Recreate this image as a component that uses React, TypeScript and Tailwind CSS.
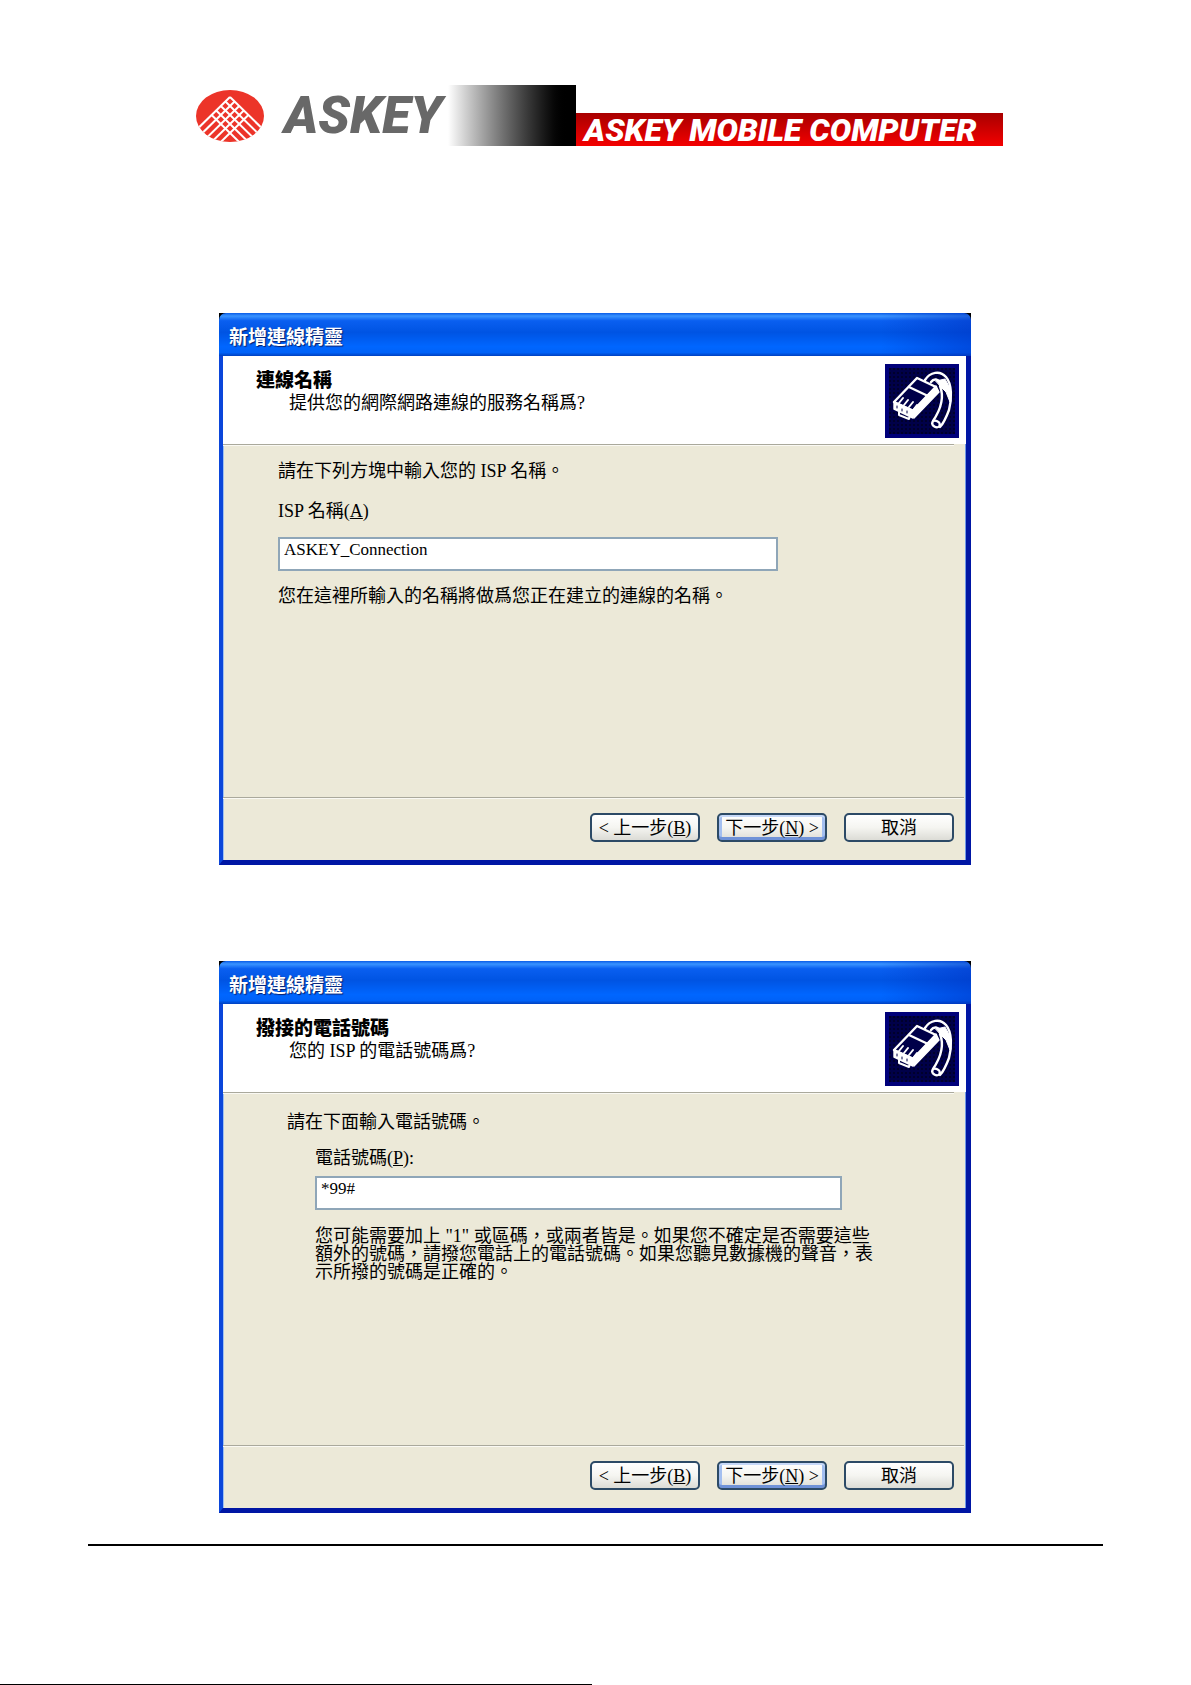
import type { ReactNode } from "react";
import clsx from "clsx";

function AskeyMark() {
  const steps = [0, 1, 2, 3, 4];

  return (
    <svg viewBox="0 0 68 52" className="h-13 w-17 shrink-0" aria-hidden="true">
      <clipPath id="mark">
        <ellipse cx="34" cy="26" rx="34" ry="26" />
      </clipPath>
      <g clipPath="url(#mark)">
        <rect width="68" height="52" fill="#ec3429" />
        <g stroke="#fff" strokeWidth="2">
          {steps.map((n) => (
            <g key={n}>
              <line x1={34 - n * 4.6} y1={7 + n * 4.5} x2={80 - n * 4.6} y2={52 + n * 4.5} />
              <line x1={34 + n * 4.6} y1={7 + n * 4.5} x2={-12 + n * 4.6} y2={52 + n * 4.5} />
            </g>
          ))}
        </g>
      </g>
    </svg>
  );
}

function PlugIcon() {
  return (
    <svg viewBox="0 0 74 74" className="mt-2 size-[74px] shrink-0" aria-hidden="true">
      <defs>
        <pattern id="dots" width="4" height="4" patternUnits="userSpaceOnUse">
          <rect width="4" height="4" fill="#000049" />
          <rect width="2" height="2" fill="#00002c" />
        </pattern>
      </defs>
      <rect width="74" height="74" fill="#00007a" />
      <rect x="4" y="4" width="66" height="66" fill="url(#dots)" />
      <g stroke="#fff" strokeLinecap="round" strokeLinejoin="round" fill="none">
        <path d="M40 16C45 8 55 6 61 13C67 20 67 35 64 46C61 54 58 60 55 63" strokeWidth="2.4" />
        <path d="M46 18C49 14 53 15 56 19" strokeWidth="2.4" />
        <path d="M55 22C59 32 56 45 48 57" strokeWidth="2.4" />
        <path d="M51 17L60 15L65 24L65 38L61 28L56 23Z" fill="#fff" strokeWidth="1" />
        <ellipse cx="51" cy="60" rx="4" ry="3" transform="rotate(25 51 60)" fill="#000049" strokeWidth="2.4" />
        <path d="M32 14L51 23L29 47L9 38Z" fill="#000049" strokeWidth="2.4" />
        <path d="M51 22L54 28L29 54L28 46Z" fill="#fff" strokeWidth="1.4" />
        <path d="M24 23L43 32" strokeWidth="2.4" />
        <path d="M9 38L9 45L28 54L29 47Z" fill="#fff" strokeWidth="1.4" />
        <path d="M14 39L18 34M19 41L23 36M24 43L28 38M29 45L32 41" strokeWidth="2" />
        <path d="M14 48L14 51L24 55L25 52" strokeWidth="2" />
        <path d="M12 42L12 44M17 45L17 47M22 47L22 49" stroke="#000049" strokeWidth="1" />
      </g>
    </svg>
  );
}

function WizardButton({ primary, children }: { primary?: boolean; children: ReactNode }) {
  return (
    <button
      type="button"
      className={clsx(
        "h-[29px] w-[110px] rounded-[5px] border-2 border-[#2c4a66] bg-linear-to-b from-white via-[#f5f5f1] to-[#dcdcd6] text-[18px] leading-5 whitespace-nowrap",
        primary && "shadow-[inset_0_2px_0_#c6d8f8,inset_0_-3px_0_#6f92d8,inset_3px_0_0_#a4bff0,inset_-3px_0_0_#a4bff0]",
      )}
    >
      {children}
    </button>
  );
}

function Separator({ className }: { className?: string }) {
  return <div className={clsx("h-[2px] border-t border-[#aaa99c] bg-[#faf9f3]", className)} />;
}

interface WizardProps {
  heading: string;
  question: string;
  children: ReactNode;
}

function Wizard({ heading, question, children }: WizardProps) {
  return (
    <section className="mx-auto flex min-h-[552px] w-full max-w-[752px] flex-col bg-black">
      <div className="flex h-[43px] items-center rounded-t-[7px] bg-[linear-gradient(to_right,transparent_88%,#0030c080_100%),linear-gradient(to_bottom,#0a5ce8_0%,#3a94ff_7%,#0a5ff0_18%,#0054e3_45%,#0066ff_78%,#0062f8_92%,#0040c0_100%)] px-[10px] pt-[6px]">
        <h2 className="text-[19px] leading-6 font-bold text-white [text-shadow:1px_1px_1px_#0a1f6b]">新增連線精靈</h2>
      </div>
      <div className="flex flex-1 flex-col border-r-5 border-b-5 border-l-4 border-t-0 border-r-[#0016a4] border-b-[#0016a4] border-l-[#0b46da] bg-[#ece9d8] shadow-[inset_1px_0_0_#9fc0f0,inset_-1px_0_0_#6f9ae8]">
        <header className="flex h-[88px] justify-between bg-white pr-[7px] pl-[33px]">
          <div className="pt-[14px]">
            <h3 className="text-[19px] leading-[22px] font-black">{heading}</h3>
            <p className="pl-[33px] text-[18px] leading-[22px]">{question}</p>
          </div>
          <PlugIcon />
        </header>
        <Separator className="mr-3" />
        <div className="flex-1 text-[18px] leading-6">{children}</div>
        <Separator className="mr-[2px]" />
        <footer className="flex justify-end gap-[17px] pt-[14px] pr-3 pb-[18px]">
          <WizardButton>
            &lt; 上一步(<u>B</u>)
          </WizardButton>
          <WizardButton primary>
            下一步(<u>N</u>) &gt;
          </WizardButton>
          <WizardButton>取消</WizardButton>
        </footer>
      </div>
    </section>
  );
}

const inputClass =
  "block h-[34px] w-full border-2 border-[#8fa6b8] bg-white px-1 pb-2 text-[17px] leading-5 outline-none";

export default function App() {
  return (
    <div className="bg-white pt-[85px] font-['Liberation_Serif','Noto_Sans_CJK_TC',serif] text-black">
      <header className="flex h-[61px] items-stretch justify-center pl-2">
        <div className="flex items-center">
          <AskeyMark />
          <span className="w-[184px] pt-px pl-5 font-['Roboto',sans-serif] text-[52px] leading-none font-black text-[#686868] italic">
            ASKEY
          </span>
        </div>
        <div className="w-32 bg-linear-to-r from-white to-black to-95%" />
        <div className="flex h-[33px] w-[427px] items-center self-end bg-linear-to-b from-[#a80000] to-[#f40000] pl-2 font-['Roboto',sans-serif] text-[32px] leading-none font-black whitespace-nowrap text-white italic">
          ASKEY MOBILE COMPUTER
        </div>
      </header>

      <main className="mt-[167px] flex flex-col gap-24 pr-px">
        <Wizard heading="連線名稱" question="提供您的網際網路連線的服務名稱爲?">
          <div className="pt-[13px] pl-[55px]">
            <p>請在下列方塊中輸入您的 ISP 名稱。</p>
            <label htmlFor="isp" className="mt-4 block">
              ISP 名稱(<u>A</u>)
            </label>
            <div className="mt-[14px] max-w-[500px]">
              <input id="isp" type="text" defaultValue="ASKEY_Connection" className={inputClass} />
            </div>
            <p className="mt-[13px]">您在這裡所輸入的名稱將做爲您正在建立的連線的名稱。</p>
          </div>
        </Wizard>

        <Wizard heading="撥接的電話號碼" question="您的 ISP 的電話號碼爲?">
          <div className="pt-4 pl-16">
            <p>請在下面輸入電話號碼。</p>
            <div className="pl-7">
              <label htmlFor="phone" className="mt-3 block">
                電話號碼(<u>P</u>):
              </label>
              <div className="mt-[6px] max-w-[527px]">
                <input id="phone" type="text" defaultValue="*99#" className={inputClass} />
              </div>
              <p className="mt-[17px] leading-[18px]">
                您可能需要加上 "1" 或區碼，或兩者皆是。如果您不確定是否需要這些
                <br />
                額外的號碼，請撥您電話上的電話號碼。如果您聽見數據機的聲音，表
                <br />
                示所撥的號碼是正確的。
              </p>
            </div>
          </div>
        </Wizard>
      </main>

      <hr className="mx-[88px] mt-[31px] border-t-2 border-black" />
      <div className="mt-[138px] h-px w-[592px] max-w-full bg-black" />
    </div>
  );
}
